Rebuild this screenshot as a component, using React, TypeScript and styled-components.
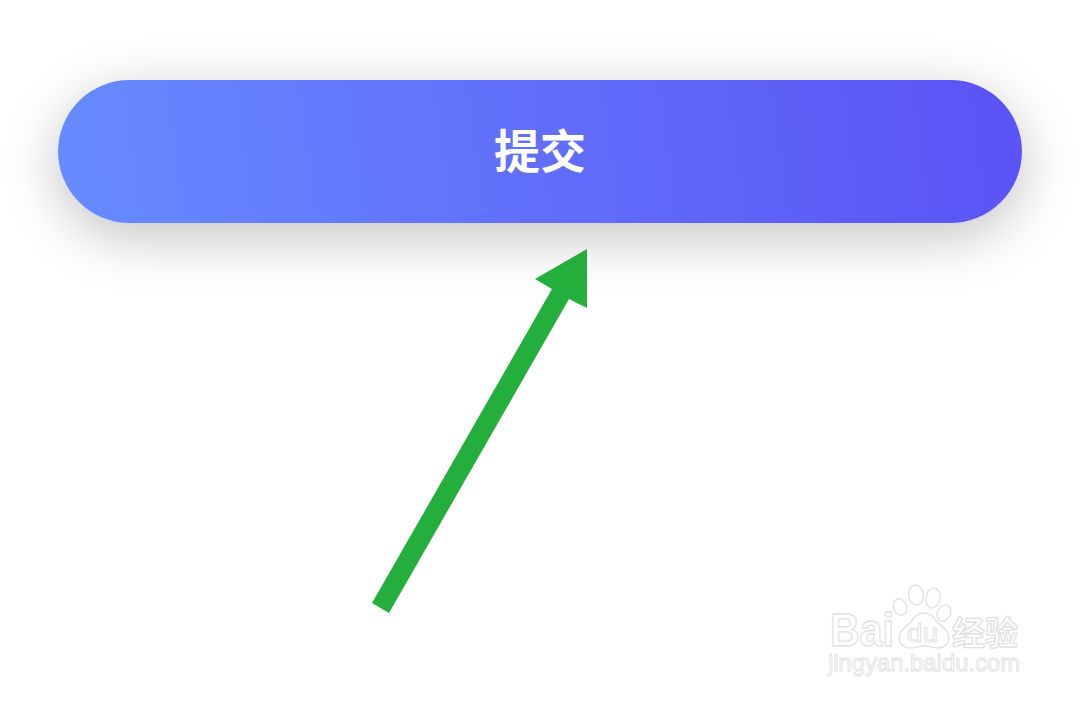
import React from "react";
import styled, { createGlobalStyle } from "styled-components";

const Global = createGlobalStyle`
  html, body { margin: 0; padding: 0; background: #fff; }
`;

const Page = styled.main`
  position: relative;
  width: 1080px;
  height: 701px;
  box-sizing: border-box;
  padding: 80px 58px 0;
  overflow: hidden;
  background: #fff;
`;

const SubmitButton = styled.button`
  display: flex;
  align-items: center;
  justify-content: center;
  width: 964px;
  height: 143px;
  padding: 0 0 7px;
  border: 0;
  border-radius: 72px;
  background: linear-gradient(82deg, #678bff 0%, #5a52f5 100%);
  box-shadow: 0 14px 56px rgba(0, 0, 0, 0.24);
  color: #fff;
  font-family: "Noto Sans CJK SC", sans-serif;
  font-size: 46px;
  font-weight: 700;
  line-height: 1;
`;

const ArrowIcon = styled.svg`
  display: block;
  width: 216px;
  height: 365px;
  margin: 26px 0 0 314px;
`;

const Watermark = styled.svg`
  position: absolute;
  left: 820px;
  top: 580px;
  width: 210px;
  height: 105px;
`;

const LogoText = styled.text`
  fill: #fff;
  stroke: #e2e2e2;
  stroke-width: 1.3;
  font-family: "Liberation Sans", sans-serif;
  font-size: 46px;
  font-weight: 700;
`;

const LogoCjk = styled(LogoText)`
  font-family: "Noto Sans CJK SC", sans-serif;
  font-size: 33px;
  font-weight: 700;
`;

const LogoUrl = styled(LogoText)`
  font-size: 24px;
  font-weight: 400;
  stroke-width: 1;
`;

const LogoDu = styled(LogoText)`
  font-size: 25px;
  font-weight: 400;
  stroke-width: 1;
`;

const Paw = styled.g`
  fill: #fff;
  stroke: #e2e2e2;
  stroke-width: 1.4;
`;

export default function App() {
  return (
    <Page>
      <Global />
      <SubmitButton type="button">提交</SubmitButton>
      <ArrowIcon viewBox="0 0 216 365" aria-hidden="true">
        <polygon
          fill="#24ae3b"
          points="215,0 163,30 180,40 0,354 17,364 197,50 215,59"
        />
      </ArrowIcon>
      <Watermark viewBox="0 0 210 105">
        <LogoText x="10" y="66" textLength="64" lengthAdjust="spacingAndGlyphs">
          Bai
        </LogoText>
        <Paw>
          <ellipse cx="80" cy="27" rx="6.5" ry="8.5" transform="rotate(-25 80 27)" />
          <ellipse cx="96" cy="15" rx="7.5" ry="10" transform="rotate(-8 96 15)" />
          <ellipse cx="113" cy="18" rx="7" ry="10" transform="rotate(12 113 18)" />
          <ellipse cx="124" cy="33" rx="6.5" ry="8.5" transform="rotate(30 124 33)" />
          <path d="M104 33c8 0 10 6 14 10 5 4 11 8 11 15 0 7-6 10-12 10-5 0-9-2-13-2s-8 2-13 2c-6 0-12-3-12-10 0-7 6-11 11-15 4-4 6-10 14-10z" />
        </Paw>
        <LogoDu x="87" y="62" textLength="31" lengthAdjust="spacingAndGlyphs">
          du
        </LogoDu>
        <LogoCjk x="132" y="65" textLength="66" lengthAdjust="spacingAndGlyphs">
          经验
        </LogoCjk>
        <LogoUrl x="8" y="91" textLength="192" lengthAdjust="spacingAndGlyphs">
          jingyan.baidu.com
        </LogoUrl>
      </Watermark>
    </Page>
  );
}
